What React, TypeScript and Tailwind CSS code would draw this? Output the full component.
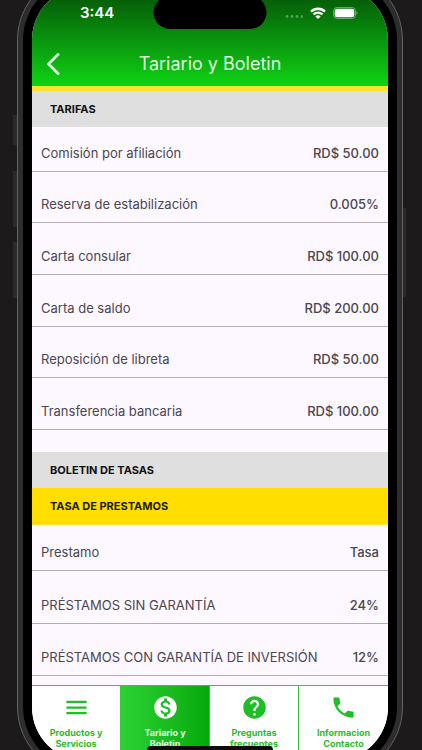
import React from 'react';
import type { IconType } from 'react-icons';
import { MdHelp, MdMenu, MdMonetizationOn, MdPhone } from 'react-icons/md';

interface Rate {
  name: string;
  value: string;
}

interface Tab {
  label: [string, string];
  icon: IconType;
  active?: boolean;
}

const fees: Rate[] = [
  { name: 'Comisión por afiliación', value: 'RD$ 50.00' },
  { name: 'Reserva de estabilización', value: '0.005%' },
  { name: 'Carta consular', value: 'RD$ 100.00' },
  { name: 'Carta de saldo', value: 'RD$ 200.00' },
  { name: 'Reposición de libreta', value: 'RD$ 50.00' },
  { name: 'Transferencia bancaria', value: 'RD$ 100.00' },
];

const loans: Rate[] = [
  { name: 'PRÉSTAMOS SIN GARANTÍA', value: '24%' },
  { name: 'PRÉSTAMOS CON GARANTÍA DE INVERSIÓN', value: '12%' },
];

const tabs: Tab[] = [
  { label: ['Productos y', 'Servicios'], icon: MdMenu },
  { label: ['Tariario y', 'Boletin'], icon: MdMonetizationOn, active: true },
  { label: ['Preguntas', 'frecuentes'], icon: MdHelp },
  { label: ['Informacion', 'Contacto'], icon: MdPhone },
];

const nameCell = 'border-b border-[#b3aeb4] px-[9px] pb-2 text-left align-bottom font-normal';
const valueCell = 'border-b border-[#b3aeb4] px-[9px] pb-2 text-right align-bottom font-medium';

const WifiIcon: React.FC = () => (
  <svg viewBox="0 0 16 12" className="h-3 w-4" fill="none" stroke="white" strokeWidth="2.3" aria-hidden="true">
    <path d="M1 4.6a10 10 0 0 1 14 0" />
    <path d="M3.5 7.5a6.4 6.4 0 0 1 9 0" />
    <path d="M8 12 5.4 9.6a3.6 3.6 0 0 1 5.2 0z" fill="white" stroke="none" />
  </svg>
);

const BatteryIcon: React.FC = () => (
  <svg viewBox="0 0 25 12" className="h-3 w-[25px]" aria-hidden="true">
    <rect x="0.5" y="0.5" width="22" height="11" rx="3.5" fill="none" stroke="white" strokeOpacity="0.4" />
    <rect x="1.7" y="1.7" width="19.6" height="8.6" rx="2.4" fill="white" />
    <path d="M23.6 4.2c1.2.5 1.2 3.1 0 3.6z" fill="white" fillOpacity="0.5" />
  </svg>
);

const StatusBar: React.FC = () => (
  <div className="flex h-[18px] items-center justify-between pl-12 pr-[30px]">
    <span className="text-[15px] leading-[18px] font-semibold text-white">3:44</span>
    <div className="flex items-center gap-[7px]">
      <svg viewBox="0 0 18 12" className="h-3 w-[18px]" fill="white" fillOpacity="0.3" aria-hidden="true">
        <circle cx="2" cy="9.5" r="1.4" />
        <circle cx="7" cy="9.5" r="1.4" />
        <circle cx="12" cy="9.5" r="1.4" />
        <circle cx="17" cy="9.5" r="1.4" />
      </svg>
      <WifiIcon />
      <BatteryIcon />
    </div>
  </div>
);

const Header: React.FC = () => (
  <header className="border-b-[5px] border-[#ffe42e] bg-linear-to-b from-[#044f06] to-[#0fd414] pt-[18px]">
    <StatusBar />
    <div className="mt-5 grid h-11 grid-cols-[42px_1fr_42px] items-center">
      <button type="button" aria-label="Volver" className="flex h-11 items-center justify-center">
        <svg viewBox="0 0 14 24" className="h-6 w-3.5" fill="none" stroke="#dcf8dc" strokeWidth="2.9" strokeLinecap="round" strokeLinejoin="round">
          <path d="M12 2.5 2.5 12l9.5 9.5" />
        </svg>
      </button>
      <h1 className="text-center text-lg text-[#dffbdf]">Tariario y Boletin</h1>
    </div>
  </header>
);

const Rows: React.FC<{ items: Rate[]; rowClass: string }> = ({ items, rowClass }) => (
  <tbody>
    {items.map((item) => (
      <tr key={item.name} className={rowClass}>
        <th scope="row" className={nameCell}>{item.name}</th>
        <td className={valueCell}>{item.value}</td>
      </tr>
    ))}
  </tbody>
);

const TabBar: React.FC = () => (
  <nav className="mt-[9px] grid grid-cols-4 divide-x divide-[#3fbf45] border-t border-[#3fbf45] bg-white">
    {tabs.map(({ label, icon: Icon, active }) => (
      <a
        key={label[0]}
        href="#"
        aria-current={active ? 'page' : undefined}
        className={`flex flex-col items-center pt-2 pb-3 text-center text-[9px] leading-[11px] font-bold ${
          active ? 'bg-linear-to-r from-[#2bd232] to-[#03a909] text-[#e6fbe6]' : 'text-[#1fbd26]'
        }`}
      >
        <Icon className={`h-[27px] w-[27px] ${active ? 'text-white' : ''}`} />
        <span className="mt-1.5">
          {label[0]}
          <br />
          {label[1]}
        </span>
      </a>
    ))}
  </nav>
);

const App: React.FC = () => {
  return (
    <div className="h-screen overflow-hidden bg-[#1c1a1b] font-['Inter',sans-serif]">
      <div className="relative -mt-[29px] mr-[19px] ml-[17px]">
        {/* Side keys */}
        <div className="absolute top-36 -left-1 h-[30px] w-1 bg-[#2b2a2b]" />
        <div className="absolute top-[200px] -left-1 h-14 w-1 bg-[#2b2a2b]" />
        <div className="absolute top-[271px] -left-1 h-14 w-1 bg-[#2b2a2b]" />
        <div className="absolute top-[237px] -right-[3px] h-[89px] w-[3px] bg-[#2b2a2b]" />

        <div className="rounded-[69px] border border-[#626263] bg-[#2d2d2f] p-[5px]">
          <div className="rounded-[63px] bg-black p-[9px]">
            <div className="relative overflow-hidden rounded-[54px] bg-[#fdf7ff]">
              <Header />
              <div className="absolute top-2.5 left-1/2 h-[33px] w-[113px] -translate-x-1/2 rounded-full bg-black" />

              <main className="text-[13px] leading-5 text-[#4a474d]">
                <h2 className="bg-[#dfdfdf] px-[18px] py-2 text-[11px] font-bold text-[#111111]">TARIFAS</h2>
                <table className="h-[303px] w-full border-separate border-spacing-0">
                  <Rows items={fees} rowClass="h-[51px] first:h-11" />
                </table>

                <h2 className="mt-[22px] bg-[#dfdfdf] px-[18px] py-2 text-[11px] font-bold text-[#111111]">BOLETIN DE TASAS</h2>
                <h3 className="border-b border-[#ffe42e] bg-[#ffde00] px-[18px] py-2 text-[11px] font-bold text-[#1b1a00]">TASA DE PRESTAMOS</h3>
                <table className="w-full border-separate border-spacing-0">
                  <thead>
                    <tr className="h-[46px]">
                      <th scope="col" className={nameCell}>Prestamo</th>
                      <th scope="col" className={valueCell}>Tasa</th>
                    </tr>
                  </thead>
                  <Rows items={loans} rowClass="h-[52px] first:h-[53px]" />
                </table>
              </main>

              <TabBar />
              {/* Home indicator */}
              <div className="absolute bottom-2.5 left-1/2 h-[5px] w-[126px] -translate-x-1/2 rounded-t-sm bg-[#0d0d0d]" />
            </div>
          </div>
        </div>
      </div>
    </div>
  );
};

export default App;
